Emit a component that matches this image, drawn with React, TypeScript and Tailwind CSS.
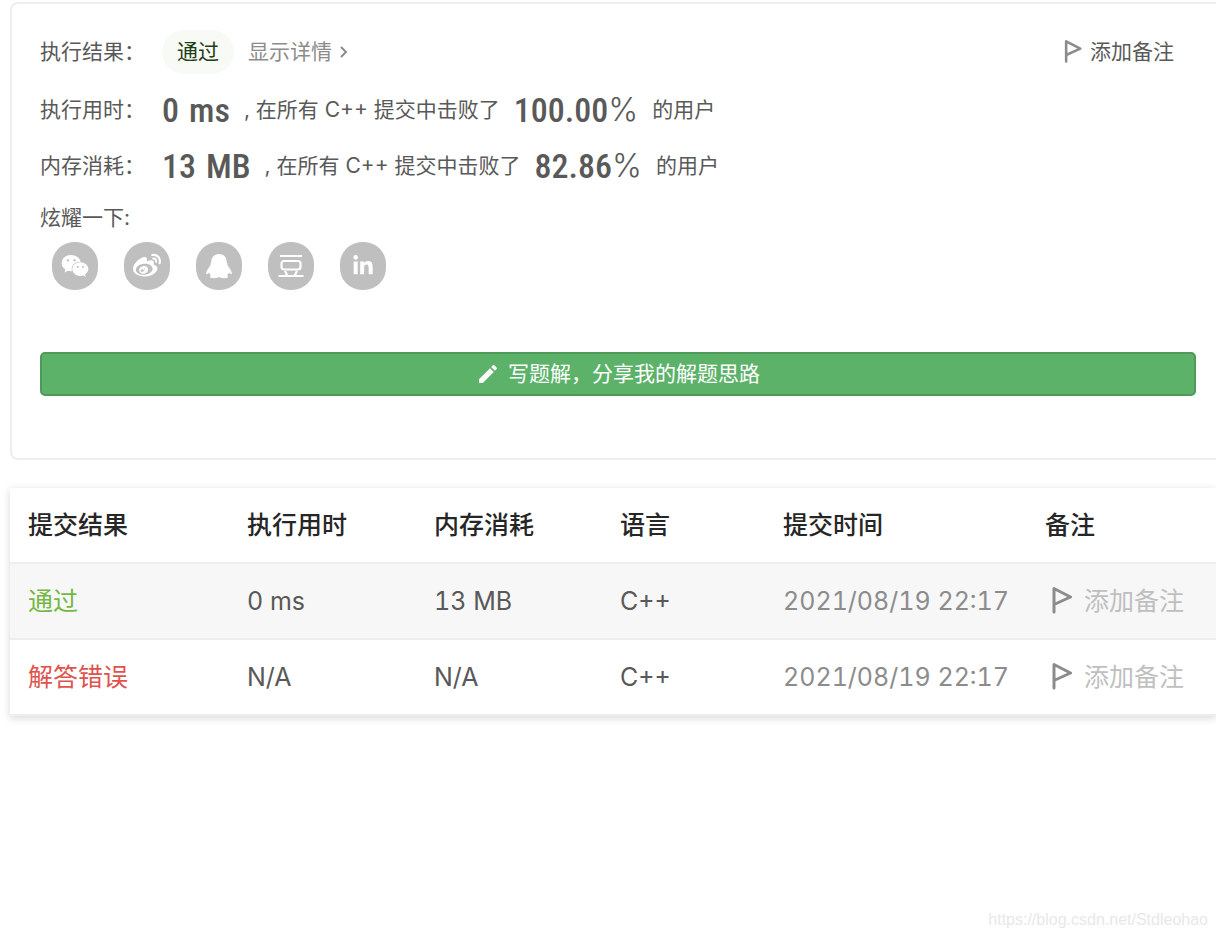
import type { ReactNode } from "react";
import { FaLinkedinIn, FaWeibo, FaWeixin } from "react-icons/fa";
import { MdEdit } from "react-icons/md";

type Submission = {
  id: number;
  accepted: boolean;
  status: string;
  runtime: string;
  memory: string;
  language: string;
  submittedAt: string;
};

const submissions: Submission[] = [
  {
    id: 1,
    accepted: true,
    status: "通过",
    runtime: "0 ms",
    memory: "13 MB",
    language: "C++",
    submittedAt: "2021/08/19 22:17",
  },
  {
    id: 2,
    accepted: false,
    status: "解答错误",
    runtime: "N/A",
    memory: "N/A",
    language: "C++",
    submittedAt: "2021/08/19 22:17",
  },
];

function FlagIcon({ className }: { className: string }) {
  return (
    <svg
      viewBox="0 0 20 28"
      fill="none"
      stroke="currentColor"
      strokeWidth="3"
      strokeLinecap="round"
      strokeLinejoin="round"
      aria-hidden="true"
      className={className}
    >
      <path d="M2 25V1.500L18.500 10 2 17.500" />
    </svg>
  );
}

function QqIcon() {
  return (
    <svg viewBox="0 0 26 26" fill="currentColor" aria-hidden="true" className="size-[26px]">
      <path d="M13 1C8.300 1 5.300 4.500 5.300 8.700c0 .8-.5 1.200-.7 2.100-.2.700 0 1.200-.4 1.900C2.300 15.500.2 18 .2 20.300c0 1.300.8 1.500 2.900-.7.3 1.100.8 2 1.700 2.800-1.300.7-.9 2.500.8 2.700 2.600.4 5.200 0 7.400-1.200 2.200 1.200 4.800 1.600 7.400 1.200 1.700-.2 2.100-2 .8-2.700.9-.8 1.400-1.700 1.700-2.800 2.100 2.200 2.900 2 2.900.7 0-2.300-2.100-4.800-4-7.600-.4-.7-.2-1.200-.4-1.900-.2-.9-.7-1.300-.7-2.100C20.700 4.500 17.700 1 13 1Z" />
    </svg>
  );
}

function DoubanIcon() {
  return (
    <svg
      viewBox="0 0 26 26"
      fill="none"
      stroke="currentColor"
      strokeWidth="2.2"
      aria-hidden="true"
      className="size-[26px]"
    >
      <path d="M2 3h22M.5 23h25M7 18l2.500 5M19 18l-2.500 5" />
      <rect x="3.500" y="8" width="19" height="8.500" rx="2.500" />
    </svg>
  );
}

type ShareLinkProps = {
  label: string;
  children: ReactNode;
};

function ShareLink({ label, children }: ShareLinkProps) {
  return (
    <a
      href="#"
      aria-label={label}
      className="grid h-12 w-[46px] place-items-center rounded-[22px] bg-[#bfbfbf] text-white"
    >
      {children}
    </a>
  );
}

type StatRowProps = {
  label: string;
  value: string;
  unit: string;
  percent: string;
};

function StatRow({ label, value, unit, percent }: StatRowProps) {
  return (
    <div className="flex h-14 items-center gap-[14px] whitespace-nowrap">
      <div className="flex items-center">
        <span className="w-[122px]">{label}</span>
        <Figure>
          <span>{value}</span> <span>{unit}</span>
        </Figure>
      </div>
      <span>, 在所有 C++ 提交中击败了</span>
      <div className="flex items-center">
        <Figure>{percent}</Figure>
        <span className="text-[32px] font-light">%</span>
      </div>
      <span>的用户</span>
    </div>
  );
}

function Figure({ children }: { children: ReactNode }) {
  return (
    <strong className="flex gap-[10px] font-['Roboto_Condensed',Roboto,sans-serif] text-[34px] font-medium">
      {children}
    </strong>
  );
}

function ResultCard() {
  return (
    <section className="rounded-l-lg border-2 border-r-0 border-[#eeeeee] pt-[26px] pr-5 pb-[62px] pl-7 text-[21px] leading-8 text-[#595959]">
      <div className="mb-2 flex h-11 items-center">
        <span className="w-[122px]">执行结果：</span>
        <span className="flex h-11 items-center rounded-full bg-[#f8faf5] px-[15px] text-[#1f3d12]">
          通过
        </span>
        <a href="#" className="ml-[14px] flex items-center gap-2 text-[#8c8c8c]">
          显示详情
          <svg
            viewBox="0 0 8 12"
            fill="none"
            stroke="currentColor"
            strokeWidth="2"
            aria-hidden="true"
            className="h-3 w-2"
          >
            <path d="M1 1l5 5-5 5" />
          </svg>
        </a>
        <button type="button" className="mr-[22px] ml-auto flex items-center gap-2">
          <FlagIcon className="h-6 w-[18px] text-[#8c8c8c]" />
          添加备注
        </button>
      </div>
      <StatRow label="执行用时：" value="0" unit="ms" percent="100.00" />
      <StatRow label="内存消耗：" value="13" unit="MB" percent="82.86" />
      <div className="flex h-12 items-center">炫耀一下:</div>
      <div className="flex gap-[26px] pl-3">
        <ShareLink label="微信">
          <FaWeixin className="size-7" />
        </ShareLink>
        <ShareLink label="微博">
          <FaWeibo className="size-7" />
        </ShareLink>
        <ShareLink label="QQ">
          <QqIcon />
        </ShareLink>
        <ShareLink label="豆瓣">
          <DoubanIcon />
        </ShareLink>
        <ShareLink label="LinkedIn">
          <FaLinkedinIn className="size-[22px]" />
        </ShareLink>
      </div>
      <button
        type="button"
        className="mt-[62px] flex h-11 w-full items-center justify-center gap-2 rounded-[5px] border-2 border-[#4f9a5b] bg-[#5cb269] text-white"
      >
        <MdEdit className="size-6" aria-hidden="true" />
        写题解，分享我的解题思路
      </button>
    </section>
  );
}

function SubmissionTable() {
  return (
    <table className="w-full table-fixed border-separate border-spacing-0 bg-white text-left text-[25px] leading-9 text-[#595959] tabular-nums shadow-[0_2px_8px_rgba(0,0,0,0.16)] [&_td]:h-[76px] [&_td]:border-b-2 [&_td]:border-[#eeeeee] [&_td]:pl-[18px] [&_th]:h-[76px] [&_th]:border-b-2 [&_th]:border-[#eeeeee] [&_th]:pl-[18px]">
      <thead>
        <tr className="text-[#262626] [&_th]:font-medium">
          <th className="w-[219px]">提交结果</th>
          <th className="w-[187px]">执行用时</th>
          <th className="w-[186px]">内存消耗</th>
          <th className="w-[163px]">语言</th>
          <th className="w-[262px]">提交时间</th>
          <th>备注</th>
        </tr>
      </thead>
      <tbody className="whitespace-nowrap">
        {submissions.map((item) => (
          <tr key={item.id} className="odd:bg-[#f7f7f7]">
            <td>
              <a href="#" className={item.accepted ? "text-[#74b843]" : "text-[#e0524c]"}>
                {item.status}
              </a>
            </td>
            <td>{item.runtime}</td>
            <td>{item.memory}</td>
            <td>{item.language}</td>
            <td className="text-[#8c8c8c]">{item.submittedAt}</td>
            <td>
              <button type="button" className="flex items-center gap-3 pl-[7px] text-[#bfbfbf]">
                <FlagIcon className="h-7 w-5 text-[#8c8c8c]" />
                添加备注
              </button>
            </td>
          </tr>
        ))}
      </tbody>
    </table>
  );
}

export default function App() {
  return (
    <div className="flex min-h-screen flex-col overflow-x-hidden bg-white pt-0.5 pl-2.5 font-[Inter,'Noto_Sans_CJK_SC',sans-serif]">
      <main className="flex flex-col gap-7">
        <ResultCard />
        <SubmissionTable />
      </main>
      <footer className="mt-auto pr-2 pb-1.5 text-right font-['Liberation_Sans',sans-serif] text-base leading-6 text-[#e8e8e8]">
        https://blog.csdn.net/Stdleohao
      </footer>
    </div>
  );
}
